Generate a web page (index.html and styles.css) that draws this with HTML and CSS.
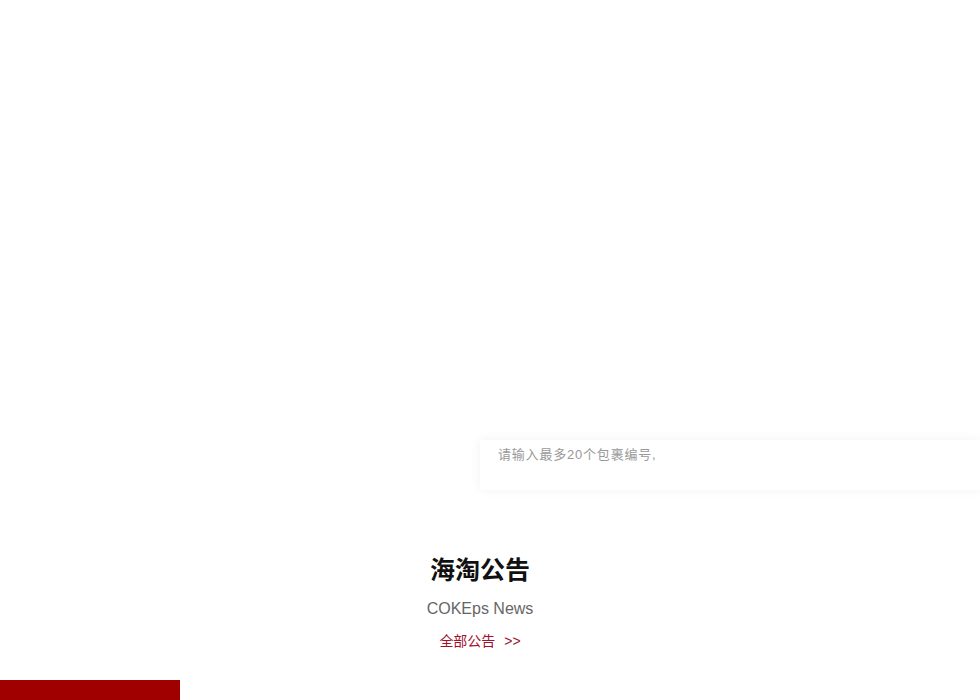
FILE: index.html
```html
<!DOCTYPE html>
<html lang="zh-CN">
<head>
  <meta charset="UTF-8">
  <title>海淘公告</title>
  <link rel="stylesheet" href="styles.css">
</head>
<body>
  <div class="wrap">
    <div class="banner"></div>
    <div class="search-row">
      <div class="search-box">
        <textarea class="search-input" placeholder="请输入最多20个包裹编号,"></textarea>
      </div>
    </div>
    <div class="notice">
      <h2 class="notice-title">海淘公告</h2>
      <p class="notice-sub">COKEps News</p>
      <a class="notice-more" href="#">全部公告 <span class="arrow">&gt;&gt;</span></a>
    </div>
    <div class="notice-bar"></div>
  </div>
</body>
</html>
```

FILE: styles.css
```css
html, body {
  margin: 0;
  padding: 0;
  background: #fff;
  overflow: hidden;
}
body {
  font-family: "Liberation Sans", Arial, "Noto Sans CJK SC", sans-serif;
  color: #333;
}
.wrap {
  width: 960px;
}
.banner {
  height: 440px;
}
.search-row {
  display: flex;
  padding-left: 480px;
  width: 500px;
}
.search-box {
  width: 500px;
  height: 50px;
  background: #fff;
  box-shadow: 0 0 10px rgba(0, 0, 0, 0.06);
}
.search-input {
  display: block;
  width: 100%;
  height: 100%;
  box-sizing: border-box;
  border: none;
  outline: none;
  resize: none;
  padding: 4px 18px;
  font-family: "Liberation Sans", Arial, "Noto Sans CJK SC", sans-serif;
  font-size: 13px;
  letter-spacing: 0.8px;
  background: transparent;
}
.search-input::placeholder {
  color: #999;
}
.notice {
  display: flex;
  flex-direction: column;
  align-items: center;
  padding-top: 65px;
}
.notice-title {
  margin: 0;
  font-size: 25px;
  font-weight: bold;
  color: #111;
  line-height: 30px;
}
.notice-sub {
  margin: 14px 0 0;
  font-size: 16px;
  color: #666;
  line-height: 20px;
}
.notice-more {
  margin-top: 13px;
  font-size: 14px;
  color: #a0112b;
  text-decoration: none;
  line-height: 18px;
}
.notice-more .arrow {
  margin-left: 5px;
}
.notice-bar {
  margin-top: 30px;
  width: 180px;
  height: 20px;
  background: #a00000;
}
```
